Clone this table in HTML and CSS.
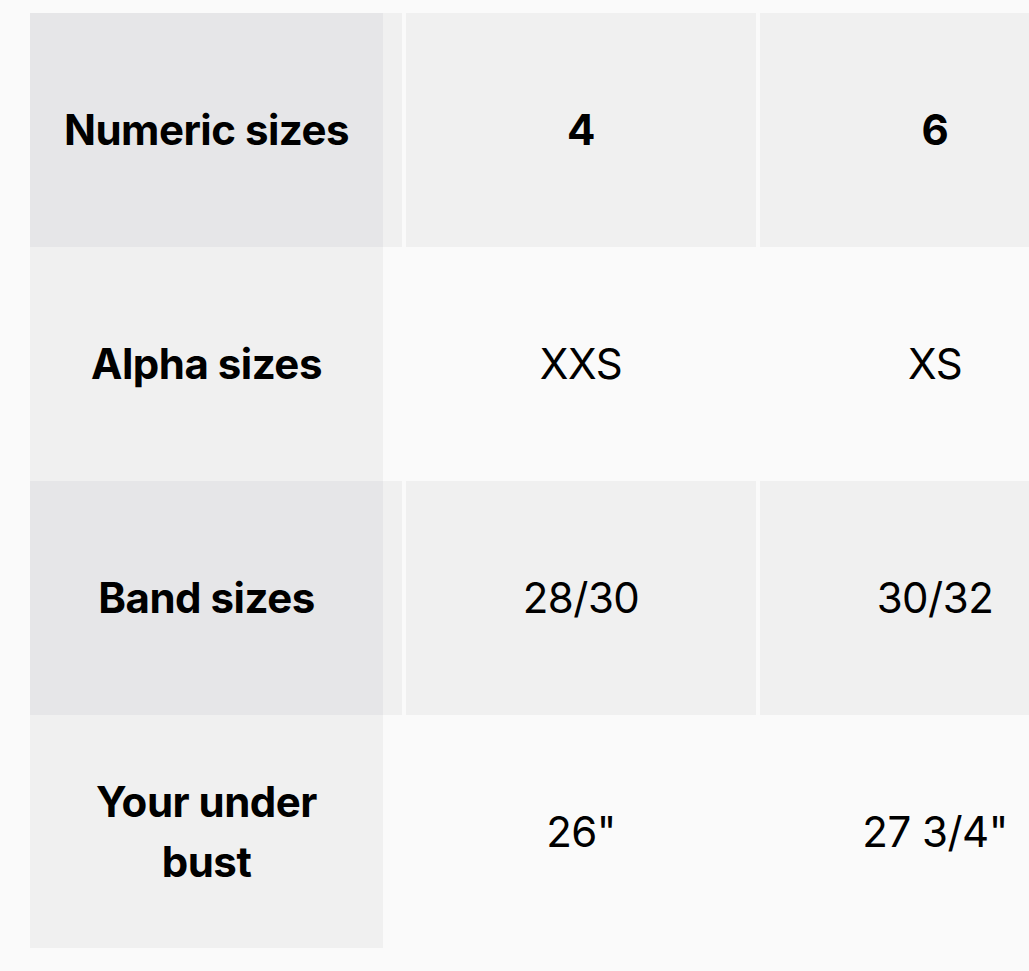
FILE: index.html
```html
<!DOCTYPE html>
<html>
<head>
<meta charset="utf-8">
<link rel="stylesheet" href="styles.css">
</head>
<body>
<div class="chart">
  <div class="row odd">
    <div class="cell first"><div class="label">Numeric sizes</div></div>
    <div class="cell head">4</div>
    <div class="cell head">6</div>
  </div>
  <div class="row even">
    <div class="cell first"><div class="label">Alpha sizes</div></div>
    <div class="cell">XXS</div>
    <div class="cell">XS</div>
  </div>
  <div class="row odd">
    <div class="cell first"><div class="label">Band sizes</div></div>
    <div class="cell">28/30</div>
    <div class="cell">30/32</div>
  </div>
  <div class="row even last">
    <div class="cell first"><div class="label">Your under<br>bust</div></div>
    <div class="cell">26"</div>
    <div class="cell">27 3/4"</div>
  </div>
</div>
</body>
</html>
```

FILE: styles.css
```css
html, body {
  margin: 0;
  padding: 0;
  background: #fafafa;
  width: 1029px;
  height: 971px;
  overflow: hidden;
}
.chart {
  padding: 13px 0 0 30px;
  font-family: Inter, "Noto Sans", sans-serif;
  color: #000;
  font-size: 42px;
  letter-spacing: -0.5px;
  line-height: 60px;
  overflow: hidden;
}
.row {
  display: flex;
  gap: 4px;
  height: 234px;
}
.row.last { height: 233px; }
.cell {
  flex: 0 0 350px;
  display: flex;
  align-items: center;
  justify-content: center;
  text-align: center;
}
.cell.first {
  flex: 0 0 372px;
  justify-content: flex-start;
  align-items: stretch;
}
.label {
  width: 353px;
  display: flex;
  align-items: center;
  justify-content: center;
  font-weight: 700;
}
.odd .cell { background: #f0f0f0; }
.odd .label { background: #e6e6e8; }
.even .label { background: #f0f0f0; }
.head { font-weight: 700; }
```
